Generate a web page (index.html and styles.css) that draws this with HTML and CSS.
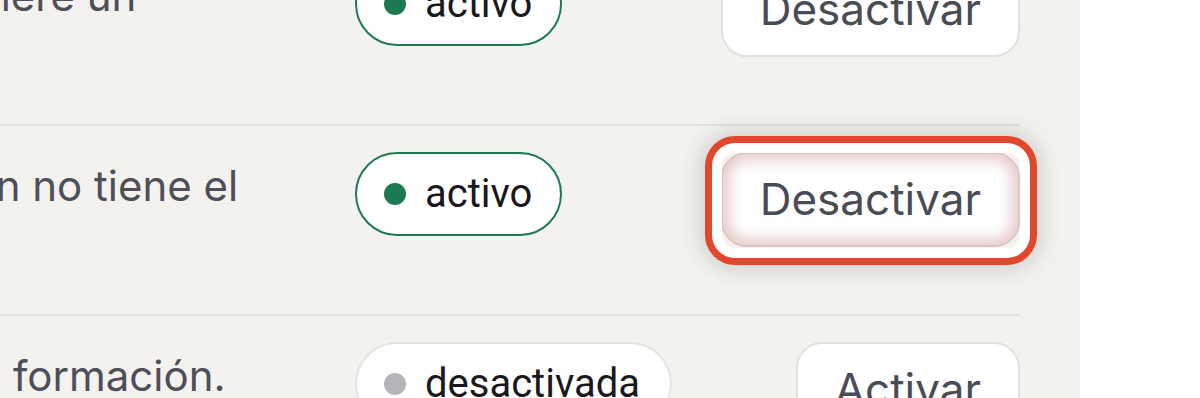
FILE: index.html
```html
<!DOCTYPE html>
<html lang="es">
<head>
<meta charset="utf-8">
<title>Cursos</title>
<link rel="stylesheet" href="styles.css">
</head>
<body>
<main class="panel">
  <div class="row">
    <p class="desc">Ese curso requiere un certificado.</p>
    <div class="status"><span class="badge badge--on"><span class="dot"></span>activo</span></div>
    <div class="action"><button class="btn" type="button">Desactivar</button></div>
  </div>
  <div class="row">
    <p class="desc">Esta cuenta aún no tiene el acceso.</p>
    <div class="status"><span class="badge badge--on"><span class="dot"></span>activo</span></div>
    <div class="action"><button class="btn btn--highlight" type="button">Desactivar</button></div>
  </div>
  <div class="row">
    <p class="desc">Sin acceso a la formación.</p>
    <div class="status"><span class="badge badge--off"><span class="dot"></span>desactivada</span></div>
    <div class="action"><button class="btn" type="button">Activar</button></div>
  </div>
</main>
</body>
</html>
```
FILE: styles.css
```css
html, body {
  margin: 0;
  background: #ffffff;
  overflow: hidden;
}

.panel {
  margin: -64px 0 0 -297px;
  width: 1317px;
  padding-right: 60px;
  background: #f3f2ef;
  min-height: 600px;
}

.row {
  display: grid;
  grid-template-columns: 1fr 365px 300px;
  align-items: start;
  padding: 26px 0;
  border-bottom: 2px solid #e4e3df;
}

.desc {
  margin: 0;
  padding-right: 50px;
  font-family: Inter, "Liberation Sans", sans-serif;
  font-size: 42px;
  line-height: 68px;
  color: #4e4f59;
  min-height: 136px;
}

.status {
  display: flex;
}

.badge {
  display: inline-flex;
  align-items: center;
  gap: 19px;
  padding: 16px 28px 16px 27px;
  border: 2px solid #1e7a52;
  border-radius: 999px;
  background: #ffffff;
  font-family: Roboto, "Liberation Sans", sans-serif;
  font-size: 40px;
  line-height: 48px;
  color: #18181d;
}

.dot {
  width: 22px;
  height: 22px;
  border-radius: 50%;
  background: #1b7a50;
  flex: none;
}

.badge--off {
  border-color: #e6e4e0;
  padding-right: 30px;
}

.badge--off .dot {
  background: #b5b4ba;
}

.action {
  display: flex;
  justify-content: flex-end;
}

.btn {
  position: relative;
  font-family: Inter, "Liberation Sans", sans-serif;
  font-size: 44px;
  line-height: 63px;
  padding: 14px 37px;
  border: 2px solid #e3e1dc;
  border-radius: 26px;
  background: #ffffff;
  color: #4a4c55;
  cursor: pointer;
}

.btn--highlight {
  border-color: #dcc4c1;
  box-shadow: inset 0 0 14px 6px rgba(205, 160, 155, 0.55);
}

.btn--highlight::after {
  content: "";
  position: absolute;
  inset: -18px -19px -20px -18px;
  border: 7px solid #e1472a;
  border-radius: 30px;
  box-shadow: inset 0 0 0 10px #ffffff, 0 0 20px 6px rgba(0, 0, 0, 0.13);
  pointer-events: none;
}
```
